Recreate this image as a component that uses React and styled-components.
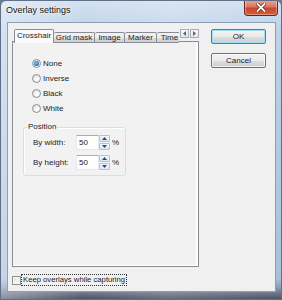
import React from 'react';
import styled, { createGlobalStyle } from 'styled-components';

const Global = createGlobalStyle`
  html, body { margin: 0; padding: 0; width: 282px; height: 300px; overflow: hidden; background: #6b7a90; }
  body { font-family: "Liberation Sans", Arial, sans-serif; font-size: 8px; color: #1c1c1c; }
  * { box-sizing: border-box; }
`;

const Window = styled.div`
  width: 282px;
  height: 300px;
  display: flex;
  flex-direction: column;
  border: 1px solid #5f7088;
  border-radius: 6px 6px 0 0;
  background:
    linear-gradient(90deg, rgba(255,255,255,0.35) 0%, rgba(255,255,255,0) 30%, rgba(255,255,255,0.15) 60%, rgba(255,255,255,0) 100%),
    linear-gradient(180deg, #d3e1f0 0%, #bfd2e8 10%, #b3c9e2 50%, #a9c0dc 93%, #8d9db5 96%, #4b5262 100%);
  overflow: hidden;
`;

const TitleBar = styled.div`
  height: 21px;
  display: flex;
  justify-content: space-between;
  align-items: flex-start;
  padding: 0 4px 0 5px;
`;

const Title = styled.div`
  font-size: 9px;
  line-height: 11px;
  padding-top: 4px;
  color: #111;
  text-shadow: 0 0 5px rgba(255,255,255,0.95), 0 0 2px rgba(255,255,255,0.9);
`;

const CloseButton = styled.div`
  width: 34px;
  height: 16px;
  margin-top: -1px;
  margin-right: -1px;
  border: 1px solid #6b2418;
  border-top: none;
  border-radius: 0 0 4px 4px;
  background: linear-gradient(180deg, #e9a898 0%, #d9775f 45%, #c44a2f 55%, #d35a3c 100%);
  box-shadow: inset 0 0 0 1px rgba(255,255,255,0.35);
  display: flex;
  align-items: center;
  justify-content: center;
`;

const Frame = styled.div`
  flex: 1;
  display: flex;
  padding: 0 5px 7px 6px;
`;

const Client = styled.div`
  flex: 1;
  display: flex;
  flex-direction: column;
  background: #f0f0f0;
  border: 1px solid #8a9fb8;
`;

const MainRow = styled.div`
  display: flex;
  padding: 6px 0 0 4px;
`;

const TabControl = styled.div`
  width: 187px;
  height: 238px;
  display: flex;
  flex-direction: column;
`;

const TabStrip = styled.div`
  height: 13px;
  display: flex;
  align-items: flex-start;
  padding-left: 2px;
  position: relative;
  z-index: 1;
`;

const TabList = styled.div`
  flex: 1;
  display: flex;
  align-items: flex-end;
  height: 14px;
  overflow: hidden;
`;

const Tab = styled.div`
  flex: none;
  width: ${p => p.$w}px;
  height: ${p => (p.$active ? 14 : 11)}px;
  border: 1px solid #898c95;
  border-bottom: ${p => (p.$active ? 'none' : '1px solid #898c95')};
  border-left: ${p => (p.$first || p.$active ? '1px solid #898c95' : 'none')};
  border-radius: 2px 2px 0 0;
  background: ${p => (p.$active
    ? '#fbfbfb'
    : 'linear-gradient(180deg, #f2f2f2 0%, #ebebeb 50%, #dddddd 51%, #cfcfcf 100%)')};
  display: flex;
  align-items: center;
  justify-content: center;
  font-size: 8px;
  line-height: 10px;
  white-space: nowrap;
  overflow: hidden;
  padding-bottom: ${p => (p.$active ? 2 : 0)}px;
`;

const ArrowPair = styled.div`
  display: flex;
  gap: 1px;
  margin-left: 1px;
`;

const ArrowButton = styled.div`
  width: 9px;
  height: 9px;
  border: 1px solid #a9acb3;
  background: linear-gradient(180deg, #fbfbfb, #e6e6e6);
  display: flex;
  align-items: center;
  justify-content: center;
`;

const Panel = styled.div`
  flex: 1;
  margin-top: -1px;
  border: 1px solid #898c95;
  background: #f2f2f2;
  box-shadow: inset -2px -1px 0 #ffffff;
  display: flex;
  flex-direction: column;
`;

const RadioList = styled.div`
  display: flex;
  flex-direction: column;
  padding: 14px 0 0 19px;
`;

const RadioRow = styled.label`
  height: 15px;
  display: flex;
  align-items: center;
  gap: 2px;
  font-size: 8px;
`;

const RadioCircle = styled.span`
  width: 9px;
  height: 9px;
  border-radius: 50%;
  border: 1px solid #8e8f8f;
  background: radial-gradient(circle at 60% 65%, #ffffff 0%, #f2f2f2 40%, #d4d4d4 100%);
  display: flex;
  align-items: center;
  justify-content: center;
  &::after {
    content: '';
    width: 5px;
    height: 5px;
    border-radius: 50%;
    display: ${p => (p.$checked ? 'block' : 'none')};
    background: radial-gradient(circle at 45% 40%, #9fd3ff 0%, #2e86d6 45%, #0d4f9a 100%);
  }
`;

const GroupBox = styled.fieldset`
  width: 103px;
  height: 54px;
  margin: 6px 0 0 10px;
  padding: 0;
  border: 1px solid #d5dfe5;
  border-radius: 3px;
  box-shadow: inset 1px 1px 0 #ffffff;
`;

const Legend = styled.legend`
  font-size: 8px;
  line-height: 10px;
  padding: 0 1px;
  margin-left: 3px;
`;

const FieldRows = styled.div`
  display: flex;
  flex-direction: column;
  gap: 5px;
  padding: 3px 0 0 9px;
`;

const FieldRow = styled.div`
  height: 15px;
  display: flex;
  align-items: center;
`;

const FieldLabel = styled.span`
  width: 43px;
  font-size: 8px;
`;

const TextBox = styled.div`
  width: 23px;
  height: 15px;
  background: #fff;
  border: 1px solid #e3e9ef;
  border-top-color: #abadb3;
  display: flex;
  align-items: center;
  padding-left: 2px;
  font-size: 8px;
`;

const Spinner = styled.div`
  width: 11px;
  height: 15px;
  display: flex;
  flex-direction: column;
  gap: 1px;
`;

const SpinHalf = styled.div`
  flex: 1;
  border: 1px solid #b6c3d3;
  border-radius: 1px;
  background: linear-gradient(180deg, #f3f8fd, #d9e6f3);
  display: flex;
  align-items: center;
  justify-content: center;
`;

const Percent = styled.span`
  margin-left: 2px;
  font-size: 8px;
`;

const ButtonColumn = styled.div`
  display: flex;
  flex-direction: column;
  gap: 9px;
  margin-left: 12px;
`;

const Button = styled.div`
  width: 55px;
  height: 15px;
  border: 1px solid ${p => (p.$default ? '#3c7fb1' : '#707070')};
  border-radius: 2px;
  background: linear-gradient(180deg, #f2f2f2 0%, #ebebeb 50%, #dddddd 51%, #cfcfcf 100%);
  box-shadow: inset 0 0 0 1px ${p => (p.$default ? '#9fe2f6' : 'rgba(255,255,255,0.7)')};
  display: flex;
  align-items: center;
  justify-content: center;
  font-size: 8px;
`;

const CheckRow = styled.div`
  display: flex;
  align-items: center;
  gap: 1px;
  margin: 8px 0 0 4px;
`;

const CheckBox = styled.span`
  width: 9px;
  height: 9px;
  border: 1px solid #8e8f8f;
  background: linear-gradient(135deg, #dcdcdc 0%, #f4f4f4 60%, #ffffff 100%);
  box-shadow: inset 0 0 0 1px #f7f7f7;
`;

const CheckLabel = styled.span`
  font-size: 7.7px;
  line-height: 10px;
  padding: 0 1px;
  outline: 1px dotted #333;
  outline-offset: 0;
`;

const Tri = ({ dir, color = '#4b6584', w = 5, h = 3 }) => {
  const pts = {
    up: `0,${h} ${w / 2},0 ${w},${h}`,
    down: `0,0 ${w / 2},${h} ${w},0`,
    left: `${h},0 0,${w / 2} ${h},${w}`,
    right: `0,0 ${h},${w / 2} 0,${w}`,
  }[dir];
  const horiz = dir === 'left' || dir === 'right';
  return (
    <svg width={horiz ? h : w} height={horiz ? w : h} style={{ display: 'block' }}>
      <polygon points={pts} fill={color} />
    </svg>
  );
};

const radios = [
  { label: 'None', checked: true },
  { label: 'Inverse' },
  { label: 'Black' },
  { label: 'White' },
];

const tabs = [
  { label: 'Crosshair', w: 40, active: true },
  { label: 'Grid mask', w: 41 },
  { label: 'Image', w: 30 },
  { label: 'Marker', w: 32 },
  { label: 'Time', w: 26 },
];

export default function App() {
  return (
    <>
      <Global />
      <Window>
        <TitleBar>
          <Title>Overlay settings</Title>
          <CloseButton>
            <svg width="10" height="9" viewBox="0 0 10 9">
              <path d="M1.5 1 L8.5 8 M8.5 1 L1.5 8" stroke="#5a1b10" strokeWidth="3.2" strokeLinecap="square" />
              <path d="M1.5 1 L8.5 8 M8.5 1 L1.5 8" stroke="#ffffff" strokeWidth="1.8" strokeLinecap="square" />
            </svg>
          </CloseButton>
        </TitleBar>
        <Frame>
          <Client>
            <MainRow>
              <TabControl>
                <TabStrip>
                  <TabList>
                    {tabs.map((t, i) => (
                      <Tab key={t.label} $w={t.w} $active={t.active} $first={i === 0}>
                        {t.label}
                      </Tab>
                    ))}
                  </TabList>
                  <ArrowPair>
                    <ArrowButton><Tri dir="left" w={5} h={3} /></ArrowButton>
                    <ArrowButton><Tri dir="right" w={5} h={3} /></ArrowButton>
                  </ArrowPair>
                </TabStrip>
                <Panel>
                  <RadioList>
                    {radios.map(r => (
                      <RadioRow key={r.label}>
                        <RadioCircle $checked={r.checked} />
                        {r.label}
                      </RadioRow>
                    ))}
                  </RadioList>
                  <GroupBox>
                    <Legend>Position</Legend>
                    <FieldRows>
                      {['By width:', 'By height:'].map(l => (
                        <FieldRow key={l}>
                          <FieldLabel>{l}</FieldLabel>
                          <TextBox>50</TextBox>
                          <Spinner>
                            <SpinHalf><Tri dir="up" w={5} h={3} color="#2d4e7a" /></SpinHalf>
                            <SpinHalf><Tri dir="down" w={5} h={3} color="#2d4e7a" /></SpinHalf>
                          </Spinner>
                          <Percent>%</Percent>
                        </FieldRow>
                      ))}
                    </FieldRows>
                  </GroupBox>
                </Panel>
              </TabControl>
              <ButtonColumn>
                <Button $default>OK</Button>
                <Button>Cancel</Button>
              </ButtonColumn>
            </MainRow>
            <CheckRow>
              <CheckBox />
              <CheckLabel>Keep overlays while capturing</CheckLabel>
            </CheckRow>
          </Client>
        </Frame>
      </Window>
    </>
  );
}
